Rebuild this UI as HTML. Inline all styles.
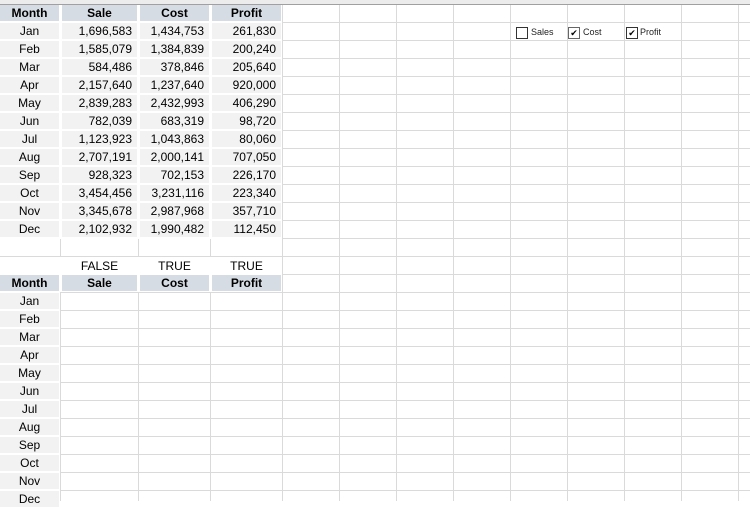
<!DOCTYPE html>
<html><head><meta charset="utf-8"><style>
body{margin:0;width:750px;height:501px;overflow:hidden;position:relative;background:#fff;font-family:"Liberation Sans",sans-serif;font-size:12px;color:#000}
.hl{position:absolute;left:0;top:5px;width:750px;height:496px;background:repeating-linear-gradient(to bottom,transparent 0 17px,#dadada 17px 18px)}
.v{position:absolute;top:4px;height:497px;width:1px;background:#dadada}
.top{position:absolute;left:0;top:0;width:750px;height:4px;background:#ececec;border-bottom:1px solid #a0a0a0}
.wb{position:absolute;background:#fff}
.c{position:absolute;height:16px;line-height:16px;background:#f2f2f2;white-space:nowrap}
.h{background:#d6dce4;font-weight:bold;text-align:center}
.a{left:0;width:59px;text-align:center}
.b{left:62px;width:70px;text-align:right;padding-right:5px}
.cc{left:140px;width:64px;text-align:right;padding-right:5px}
.d{left:212px;width:64px;text-align:right;padding-right:5px}
.ch{position:absolute;top:27px;width:10px;height:10px;border:1px solid #333;background:#fff;font-size:9px;line-height:10px;text-align:center}
.lb{position:absolute;top:26px;font-size:9px;line-height:12px;color:#222}
.w{background:#fff;text-align:center}
</style></head><body>
<div class="hl"></div>
<div class="v" style="left:60px"></div><div class="v" style="left:138px"></div><div class="v" style="left:210px"></div><div class="v" style="left:282px"></div>
<div class="v" style="left:339px"></div><div class="v" style="left:396px"></div><div class="v" style="left:453px"></div><div class="v" style="left:510px"></div><div class="v" style="left:567px"></div><div class="v" style="left:624px"></div><div class="v" style="left:681px"></div><div class="v" style="left:738px"></div>
<div class="wb" style="left:0;top:4px;width:282px;height:235px"></div>
<div class="wb" style="left:0;top:257px;width:282px;height:35px"></div>
<div class="wb" style="left:0;top:292px;width:60px;height:209px"></div>
<div class="top"></div>

<div class="c h a" style="top:5px">Month</div><div class="c h b" style="top:5px;text-align:center;padding-right:0;width:75px">Sale</div><div class="c h cc" style="top:5px;text-align:center;padding-right:0;width:69px">Cost</div><div class="c h d" style="top:5px;text-align:center;padding-right:0;width:69px">Profit</div>

<div class="c a" style="top:23px">Jan</div><div class="c b" style="top:23px">1,696,583</div><div class="c cc" style="top:23px">1,434,753</div><div class="c d" style="top:23px">261,830</div>
<div class="c a" style="top:41px">Feb</div><div class="c b" style="top:41px">1,585,079</div><div class="c cc" style="top:41px">1,384,839</div><div class="c d" style="top:41px">200,240</div>
<div class="c a" style="top:59px">Mar</div><div class="c b" style="top:59px">584,486</div><div class="c cc" style="top:59px">378,846</div><div class="c d" style="top:59px">205,640</div>
<div class="c a" style="top:77px">Apr</div><div class="c b" style="top:77px">2,157,640</div><div class="c cc" style="top:77px">1,237,640</div><div class="c d" style="top:77px">920,000</div>
<div class="c a" style="top:95px">May</div><div class="c b" style="top:95px">2,839,283</div><div class="c cc" style="top:95px">2,432,993</div><div class="c d" style="top:95px">406,290</div>
<div class="c a" style="top:113px">Jun</div><div class="c b" style="top:113px">782,039</div><div class="c cc" style="top:113px">683,319</div><div class="c d" style="top:113px">98,720</div>
<div class="c a" style="top:131px">Jul</div><div class="c b" style="top:131px">1,123,923</div><div class="c cc" style="top:131px">1,043,863</div><div class="c d" style="top:131px">80,060</div>
<div class="c a" style="top:149px">Aug</div><div class="c b" style="top:149px">2,707,191</div><div class="c cc" style="top:149px">2,000,141</div><div class="c d" style="top:149px">707,050</div>
<div class="c a" style="top:167px">Sep</div><div class="c b" style="top:167px">928,323</div><div class="c cc" style="top:167px">702,153</div><div class="c d" style="top:167px">226,170</div>
<div class="c a" style="top:185px">Oct</div><div class="c b" style="top:185px">3,454,456</div><div class="c cc" style="top:185px">3,231,116</div><div class="c d" style="top:185px">223,340</div>
<div class="c a" style="top:203px">Nov</div><div class="c b" style="top:203px">3,345,678</div><div class="c cc" style="top:203px">2,987,968</div><div class="c d" style="top:203px">357,710</div>
<div class="c a" style="top:221px">Dec</div><div class="c b" style="top:221px">2,102,932</div><div class="c cc" style="top:221px">1,990,482</div><div class="c d" style="top:221px">112,450</div>

<div class="c w" style="top:258px;left:62px;width:75px;background:transparent">FALSE</div>
<div class="c w" style="top:258px;left:140px;width:69px;background:transparent">TRUE</div>
<div class="c w" style="top:258px;left:212px;width:69px;background:transparent">TRUE</div>
<div class="c h a" style="top:275px">Month</div><div class="c h" style="top:275px;left:62px;width:75px">Sale</div><div class="c h" style="top:275px;left:140px;width:69px">Cost</div><div class="c h" style="top:275px;left:212px;width:69px">Profit</div>
<div class="c a" style="top:293px">Jan</div>
<div class="c a" style="top:311px">Feb</div>
<div class="c a" style="top:329px">Mar</div>
<div class="c a" style="top:347px">Apr</div>
<div class="c a" style="top:365px">May</div>
<div class="c a" style="top:383px">Jun</div>
<div class="c a" style="top:401px">Jul</div>
<div class="c a" style="top:419px">Aug</div>
<div class="c a" style="top:437px">Sep</div>
<div class="c a" style="top:455px">Oct</div>
<div class="c a" style="top:473px">Nov</div>
<div class="c a" style="top:491px">Dec</div>

<div class="ch" style="left:516px"></div><div class="lb" style="left:531px">Sales</div>
<div class="ch" style="left:568px;border-color:#666">&#10004;</div><div class="lb" style="left:583px">Cost</div>
<div class="ch" style="left:626px">&#10004;</div><div class="lb" style="left:640px">Profit</div>
</body></html>
